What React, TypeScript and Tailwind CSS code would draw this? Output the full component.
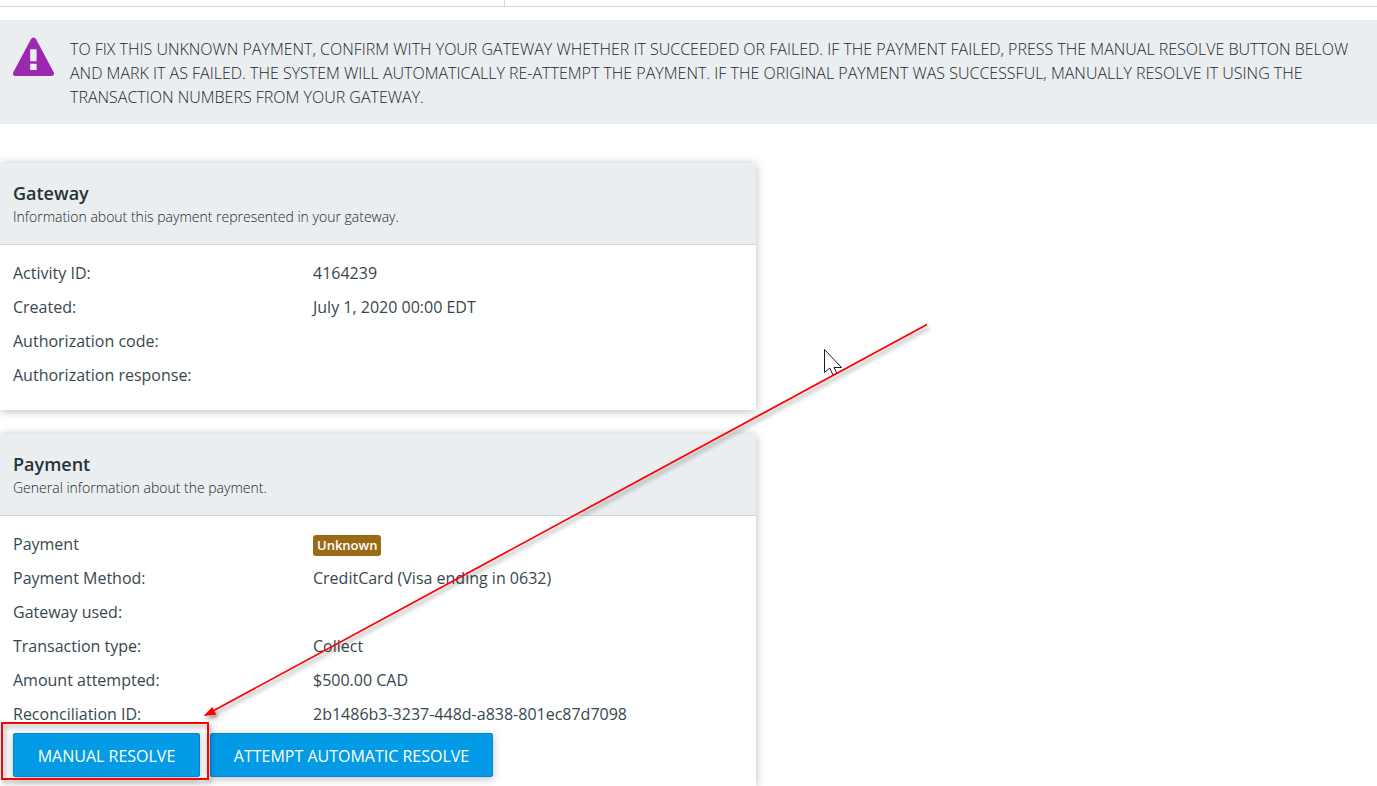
import type { ReactNode } from "react";

type Detail = { label: string; value?: ReactNode };

const gatewayDetails: Detail[] = [
  { label: "Activity ID:", value: "4164239" },
  { label: "Created:", value: "July 1, 2020 00:00 EDT" },
  { label: "Authorization code:" },
  { label: "Authorization response:" },
];

const paymentDetails: Detail[] = [
  {
    label: "Payment",
    value: (
      <span className="inline-block rounded-[3px] bg-[#9a6a16] px-1 text-[13px] leading-[21px] font-semibold text-white">
        Unknown
      </span>
    ),
  },
  { label: "Payment Method:", value: "CreditCard (Visa ending in 0632)" },
  { label: "Gateway used:" },
  { label: "Transaction type:", value: "Collect" },
  { label: "Amount attempted:", value: "$500.00 CAD" },
  { label: "Reconciliation ID:", value: "2b1486b3-3237-448d-a838-801ec87d7098" },
];

function CardHeader({ title, description }: { title: string; description: string }) {
  return (
    <header className="rounded-tr border-b border-[#cfd8dc] bg-[#eaeef1] px-[13px] pt-[18px] pb-[15px]">
      <h2 className="text-lg leading-6 font-semibold">{title}</h2>
      <p className="text-sm leading-6 font-light text-[#1c262b]">{description}</p>
    </header>
  );
}

function DetailList({ items }: { items: Detail[] }) {
  return (
    <dl className="px-[13px] pt-[11px]">
      {items.map((item) => (
        <div key={item.label} className="flex h-[34px] items-center text-base text-[#37474f]">
          <dt className="w-[300px] shrink-0">{item.label}</dt>
          <dd>{item.value}</dd>
        </div>
      ))}
    </dl>
  );
}

function WarningIcon() {
  return (
    <svg className="mt-[17px] h-10 w-[42px] shrink-0" viewBox="0 0 42 40" aria-hidden="true">
      <path
        d="M17.9 2.2Q20.5-1.4 23.1 2.2L40.8 35.4Q41.8 38.8 38.6 39H2.4Q-.8 38.8.2 35.4Z"
        fill="#9c27b0"
      />
      <path d="M17.2 12.3h6.4v12h-6.4zM17.2 26.8h6.4v6.2h-6.4z" fill="#eaeef1" />
    </svg>
  );
}

const buttonClass =
  "h-11 cursor-pointer rounded-[2px] border border-[#0288d1] bg-[#039be5] pt-[2px] text-base text-white shadow-[0_2px_8px_rgba(0,0,0,0.25)]";

export default function App() {
  return (
    <div className="relative flex min-h-screen flex-col overflow-hidden bg-white font-['Open_Sans','Noto_Sans',sans-serif] text-[#263238]">
      <div className="flex h-[7px] border-b border-[#cfd8dc]">
        <div className="w-[505px] border-r border-[#cfd8dc]" />
      </div>

      <div role="alert" className="mt-[13px] flex gap-[15px] bg-[#eaeef1] px-[13px]">
        <WarningIcon />
        <p className="pt-[17px] pb-[15px] text-base leading-6 font-light text-[#1c262b] uppercase">
          To fix this unknown payment, confirm with your gateway whether it succeeded or failed. If
          the payment failed, press the manual resolve button below and mark it as failed. The
          system will automatically re-attempt the payment. If the original payment was successful,
          manually resolve it using the transaction numbers from your gateway.
        </p>
      </div>

      <main className="mt-[39px] flex w-[54.9%] grow flex-col gap-6">
        <section className="rounded-tr bg-white pb-[18px] shadow-[0_1px_10px_rgba(0,0,0,0.28)]">
          <CardHeader
            title="Gateway"
            description="Information about this payment represented in your gateway."
          />
          <DetailList items={gatewayDetails} />
        </section>

        <section className="grow rounded-tr bg-white pb-[9px] shadow-[0_1px_10px_rgba(0,0,0,0.28)]">
          <CardHeader title="Payment" description="General information about the payment." />
          <DetailList items={paymentDetails} />
          <div className="mt-[2px] flex gap-[10px] px-[13px]">
            <div className="relative">
              <button type="button" className={`${buttonClass} w-[187px]`}>
                MANUAL RESOLVE
              </button>
              <div className="pointer-events-none absolute -top-[11px] -right-[9px] -bottom-[3px] -left-3 z-10 border-2 border-[#ff0000] drop-shadow-[2px_3px_2px_rgba(0,0,0,0.4)]" />
            </div>
            <button type="button" className={`${buttonClass} w-[283px]`}>
              ATTEMPT AUTOMATIC RESOLVE
            </button>
          </div>
        </section>
      </main>

      <svg
        className="pointer-events-none absolute top-[310px] left-[190px] h-[420px] w-[760px]"
        viewBox="190 310 760 420"
        aria-hidden="true"
      >
        <path
          d="M824.5 349.5V372.5L829.8 368L833 375L837 373.4L834 367.5H841.5Z"
          fill="#fff"
          stroke="#1a1a2e"
          strokeWidth="1"
        />
        <g className="drop-shadow-[2px_3px_2px_rgba(0,0,0,0.45)]">
          <path d="M927 324.5L211 712" stroke="#ff0000" strokeWidth="1.7" />
          <path d="M203.5 716L212.3 707L216.3 714.6Z" fill="#ff0000" />
        </g>
      </svg>
    </div>
  );
}
